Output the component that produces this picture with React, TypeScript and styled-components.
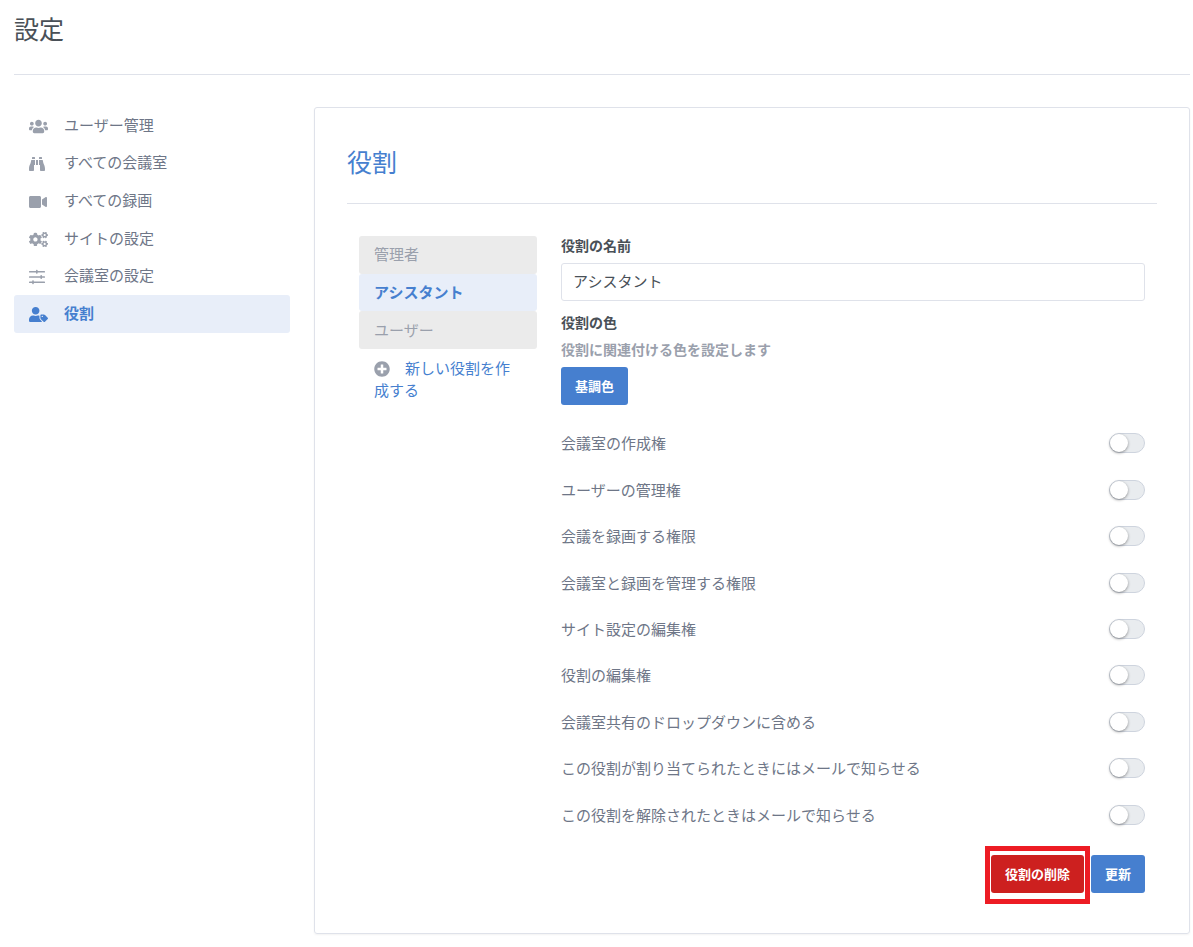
import React, { useState } from "react";
import styled, { createGlobalStyle } from "styled-components";
import {
  FaUsers,
  FaBinoculars,
  FaVideo,
  FaCogs,
  FaUserTag,
  FaPlusCircle,
} from "react-icons/fa";

const colors = {
  text: "#495057",
  soft: "#6e7687",
  muted: "#9aa0ac",
  border: "#dfe2ea",
  primary: "#467fcf",
  primarySoft: "#e8eef9",
  danger: "#cd201f",
};

const GlobalStyle = createGlobalStyle`
  *, *::before, *::after { box-sizing: border-box; }
  body {
    margin: 0;
    background: #fff;
    color: ${colors.text};
    font: 15px/22px "Noto Sans CJK JP", sans-serif;
  }
  h1, h2, ul, p { margin: 0; padding: 0; }
  ul { list-style: none; }
  button, input { font-family: inherit; }
`;

const Page = styled.div`
  padding: 10px 3px 12px 14px;
`;

const PageHeader = styled.header`
  padding-bottom: 28px;
  margin-bottom: 32px;
  border-bottom: 1px solid ${colors.border};
`;

const PageTitle = styled.h1`
  font-size: 25px;
  line-height: 36px;
  font-weight: 400;
`;

const Columns = styled.div`
  display: grid;
  grid-template-columns: 276px minmax(0, 1fr);
  align-items: start;
  gap: 24px;
`;

const SideList = styled.ul`
  display: grid;
  grid-auto-rows: 1fr;
  height: 226px;
`;

const SideLink = styled.a<{ $active?: boolean }>`
  display: flex;
  align-items: center;
  height: 100%;
  padding: 0 15px 2px;
  border-radius: 3px;
  text-decoration: none;
  color: ${(p) => (p.$active ? colors.primary : colors.soft)};
  background: ${(p) => (p.$active ? colors.primarySoft : "transparent")};
  font-weight: ${(p) => (p.$active ? 700 : 400)};
`;

const SideIcon = styled.span<{ $active?: boolean }>`
  display: flex;
  width: 35px;
  padding-top: 3px;
  color: ${(p) => (p.$active ? colors.primary : colors.muted)};
`;

const Card = styled.section`
  padding: 32px 32px 40px;
  border: 1px solid ${colors.border};
  border-radius: 3px;
  box-shadow: 0 1px 2px rgba(0, 0, 0, 0.05);
`;

const CardTitle = styled.h2`
  padding-bottom: 21px;
  margin-bottom: 32px;
  border-bottom: 1px solid ${colors.border};
  color: ${colors.primary};
  font-size: 25px;
  line-height: 42px;
  font-weight: 400;
`;

const CardBody = styled.div`
  display: grid;
  grid-template-columns: 178px minmax(0, 1fr);
  align-items: start;
  gap: 24px;
  padding: 0 12px;
`;

const RoleList = styled.ul`
  display: grid;
  grid-auto-rows: 1fr;
  height: 113px;
`;

const RoleLink = styled.a<{ $active?: boolean }>`
  display: flex;
  align-items: center;
  height: 100%;
  padding: 0 15px 1px;
  border-radius: 3px;
  text-decoration: none;
  color: ${(p) => (p.$active ? colors.primary : colors.muted)};
  background: ${(p) => (p.$active ? colors.primarySoft : "#ebebeb")};
  font-weight: ${(p) => (p.$active ? 700 : 400)};
`;

const CreateLink = styled.a`
  display: block;
  padding: 8px 15px;
  color: ${colors.primary};
  text-decoration: none;

  svg {
    margin-right: 15px;
    vertical-align: -3px;
    color: ${colors.muted};
  }
`;

const Label = styled.label`
  display: block;
  margin-bottom: 8px;
  font-size: 14px;
  line-height: 19px;
  font-weight: 700;
`;

const NameInput = styled.input`
  display: block;
  width: 100%;
  height: 38px;
  margin-bottom: 12px;
  padding: 0 11px 3px;
  border: 1px solid ${colors.border};
  border-radius: 3px;
  color: ${colors.text};
  font-size: 15px;
`;

const Hint = styled.p`
  margin-bottom: 8px;
  color: ${colors.muted};
  font-size: 14px;
  line-height: 19px;
  font-weight: 700;
`;

const Button = styled.button<{ $danger?: boolean }>`
  height: 38px;
  padding: 0 13px 2px;
  border: 1px solid transparent;
  border-radius: 3px;
  background: ${(p) => (p.$danger ? colors.danger : colors.primary)};
  color: #fff;
  font-size: 13px;
  font-weight: 700;
  cursor: pointer;
`;

const Permissions = styled.ul`
  display: grid;
  grid-auto-rows: 1fr;
  height: 418px;
  margin-top: 15px;
`;

const Permission = styled.label`
  display: flex;
  align-items: center;
  justify-content: space-between;
  height: 100%;
  color: ${colors.soft};
`;

const Switch = styled.input`
  appearance: none;
  display: flex;
  width: 36px;
  height: 20px;
  margin: 0;
  border: 1px solid #ced4de;
  border-radius: 10px;
  background: #e9ecef;
  cursor: pointer;

  &::before {
    content: "";
    width: 18px;
    height: 18px;
    border-radius: 50%;
    background: #fff;
    box-shadow: 0 1px 3px rgba(0, 0, 0, 0.4);
  }

  &:checked {
    justify-content: flex-end;
    background: ${colors.primary};
  }
`;

const Actions = styled.div`
  display: flex;
  justify-content: flex-end;
  gap: 7px;
  margin-top: 17px;
`;

const Highlight = styled.div`
  position: relative;

  &::after {
    content: "";
    position: absolute;
    inset: -9px -6px -11px;
    border: 5px solid #ed1c24;
    pointer-events: none;
  }
`;

const SlidersIcon = ({ size }: { size: number }) => (
  <svg width={size} height={size} viewBox="0 0 16 16" fill="currentColor" aria-hidden="true">
    <rect x="0" y="2" width="16" height="1.6" rx="0.6" />
    <rect x="7" y="0.8" width="1.6" height="4" rx="0.7" />
    <rect x="0" y="7.2" width="16" height="1.6" rx="0.6" />
    <rect x="11.4" y="6" width="1.6" height="4" rx="0.7" />
    <rect x="0" y="12.4" width="16" height="1.6" rx="0.6" />
    <rect x="3.2" y="11.2" width="1.6" height="4" rx="0.7" />
  </svg>
);

const sections = [
  { label: "ユーザー管理", icon: <FaUsers size={19} /> },
  { label: "すべての会議室", icon: <FaBinoculars size={16} /> },
  { label: "すべての録画", icon: <FaVideo size={18} /> },
  { label: "サイトの設定", icon: <FaCogs size={19} /> },
  { label: "会議室の設定", icon: <SlidersIcon size={16} /> },
  { label: "役割", icon: <FaUserTag size={19} />, active: true },
];

const roles = ["管理者", "アシスタント", "ユーザー"];

const permissions = [
  "会議室の作成権",
  "ユーザーの管理権",
  "会議を録画する権限",
  "会議室と録画を管理する権限",
  "サイト設定の編集権",
  "役割の編集権",
  "会議室共有のドロップダウンに含める",
  "この役割が割り当てられたときにはメールで知らせる",
  "この役割を解除されたときはメールで知らせる",
];

export default function App() {
  const [name, setName] = useState("アシスタント");

  return (
    <>
      <GlobalStyle />
      <Page>
        <PageHeader>
          <PageTitle>設定</PageTitle>
        </PageHeader>
        <Columns>
          <nav>
            <SideList>
              {sections.map((s) => (
                <li key={s.label}>
                  <SideLink href="#" $active={s.active}>
                    <SideIcon $active={s.active}>{s.icon}</SideIcon>
                    {s.label}
                  </SideLink>
                </li>
              ))}
            </SideList>
          </nav>
          <Card>
            <CardTitle>役割</CardTitle>
            <CardBody>
              <div>
                <RoleList>
                  {roles.map((r) => (
                    <li key={r}>
                      <RoleLink href="#" $active={r === "アシスタント"}>
                        {r}
                      </RoleLink>
                    </li>
                  ))}
                </RoleList>
                <CreateLink href="#">
                  <FaPlusCircle size={16} />
                  新しい役割を作成する
                </CreateLink>
              </div>
              <form onSubmit={(e) => e.preventDefault()}>
                <Label htmlFor="role-name">役割の名前</Label>
                <NameInput
                  id="role-name"
                  value={name}
                  onChange={(e) => setName(e.target.value)}
                />
                <Label htmlFor="role-colour">役割の色</Label>
                <Hint>役割に関連付ける色を設定します</Hint>
                <Button id="role-colour" type="button">
                  基調色
                </Button>
                <Permissions>
                  {permissions.map((p) => (
                    <li key={p}>
                      <Permission>
                        {p}
                        <Switch type="checkbox" />
                      </Permission>
                    </li>
                  ))}
                </Permissions>
                <Actions>
                  <Highlight>
                    <Button type="button" $danger>
                      役割の削除
                    </Button>
                  </Highlight>
                  <Button type="submit">更新</Button>
                </Actions>
              </form>
            </CardBody>
          </Card>
        </Columns>
      </Page>
    </>
  );
}
